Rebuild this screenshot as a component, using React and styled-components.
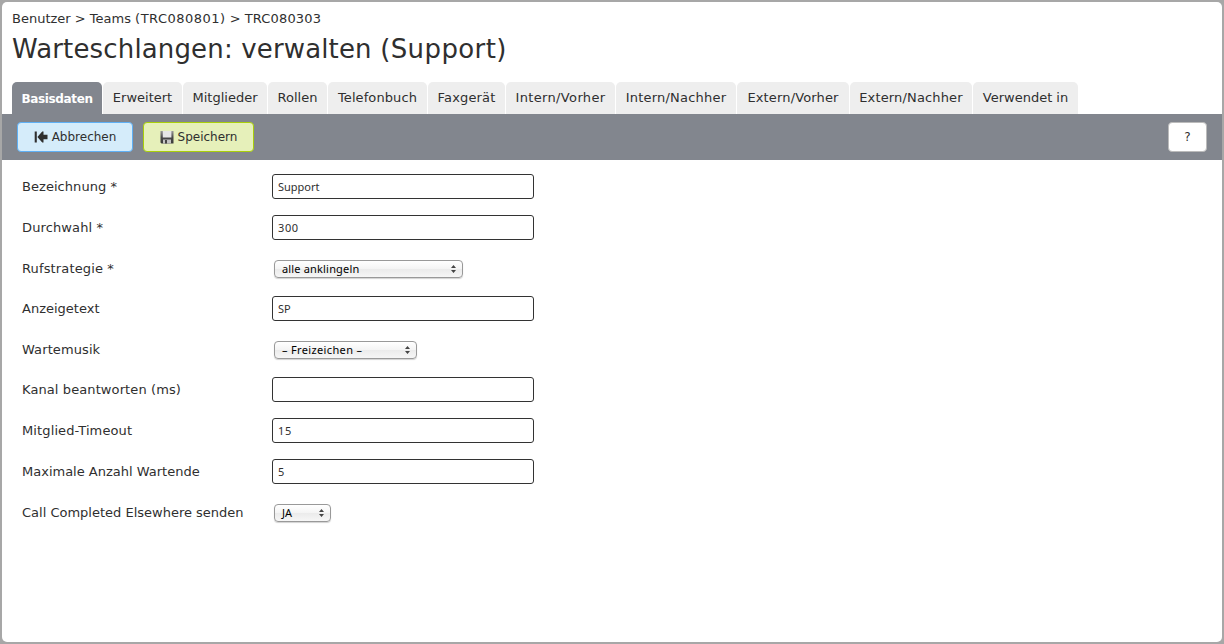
import React from "react";
import styled, { createGlobalStyle } from "styled-components";

const GlobalStyle = createGlobalStyle`
  * { box-sizing: border-box; }
  body {
    margin: 0;
    background: #a7a7a7;
    color: #2f2f2f;
    font-family: "DejaVu Sans", Verdana, sans-serif;
    font-size: 13px;
  }
  button, input { font-family: inherit; color: inherit; }
`;

const Window = styled.div`
  display: flex;
  flex-direction: column;
  height: 640px;
  margin: 2px;
  background: #fff;
  border-radius: 5px;
  overflow: hidden;
`;

const Header = styled.header`
  padding: 8px 10px 0;
  height: 80px;
  white-space: nowrap;
`;

const Text = styled.span`
  letter-spacing: ${(p) => p.$ls || 0}px;
`;

const Breadcrumb = styled.nav`
  height: 17px;
  line-height: 17px;
`;

const Title = styled.h1`
  margin: 5px 0 0;
  font-size: 26px;
  line-height: 34px;
  font-weight: 400;
`;

const Tabs = styled.nav`
  display: flex;
  gap: 1px;
  height: 32px;
  padding-left: 10px;
`;

const Tab = styled.a`
  display: flex;
  justify-content: center;
  width: ${(p) => p.$w}px;
  padding-top: ${(p) => (p.$active ? 1 : 0)}px;
  line-height: 32px;
  border-radius: 5px 5px 0 0;
  white-space: nowrap;
  color: ${(p) => (p.$active ? "#fff" : "#2f2f2f")};
  background: ${(p) => (p.$active ? "#82868e" : "#eee")};
  font-weight: ${(p) => (p.$active ? 700 : 400)};
  font-size: ${(p) => (p.$active ? 12 : 13)}px;
`;

const Toolbar = styled.div`
  display: flex;
  align-items: center;
  gap: 10px;
  height: 46px;
  padding: 0 15px;
  background: #82868e;
`;

const tones = {
  blue: ["#d5ecfa", "#5fb0f5"],
  green: ["#e6f0ba", "#a9cf0a"],
  white: ["#fff", "#bbb"],
};

const Button = styled.button`
  display: flex;
  align-items: center;
  justify-content: center;
  gap: 4px;
  width: ${(p) => p.$w}px;
  height: 30px;
  padding: 0 0 1px;
  margin-left: ${(p) => (p.$end ? "auto" : 0)};
  font-size: 12px;
  background: ${(p) => tones[p.$tone][0]};
  border: 1px solid ${(p) => tones[p.$tone][1]};
  border-radius: 4px;
  white-space: nowrap;
  svg { display: block; flex: none; }
`;

const Form = styled.form`
  padding: 6px 20px 0;
`;

const Row = styled.div`
  display: grid;
  grid-template-columns: 250px auto;
  align-items: center;
  justify-content: start;
  height: ${(p) => (p.$select ? 40 : 41)}px;
`;

const Label = styled.label`
  line-height: 17px;
  white-space: nowrap;
  padding-top: ${(p) => (p.$select ? 1 : 0)}px;
`;

const Input = styled.input`
  width: 262px;
  height: 25px;
  padding: 0 5px 1px;
  border: 1px solid #333;
  border-radius: 3px;
  background: #fff;
  font-family: "Noto Sans", "Open Sans", sans-serif;
  font-size: 11px;
  letter-spacing: ${(p) => p.$ls || 0}px;
`;

const Select = styled.div`
  display: flex;
  align-items: center;
  justify-content: space-between;
  width: ${(p) => p.$w}px;
  height: 18px;
  margin: 2px 0 0 2px;
  padding: 0 6px 0 7px;
  border: 1px solid #999;
  border-radius: 4px;
  background: linear-gradient(#fff, #f4f4f4 49%, #ebebeb 51%, #f6f6f6);
  box-shadow: 0 1px 1px rgba(0, 0, 0, 0.18);
  color: #000;
  font-family: "Noto Sans", "Open Sans", sans-serif;
  font-size: 11px;
  line-height: 16px;
  white-space: nowrap;
`;

const BackIcon = () => (
  <svg width="14" height="12" viewBox="0 0 14 12" fill="#2f2f2f">
    <path d="M.7 .5h2.1v11H.7zM3.4 6l4.8-5.4h1.3v3.2h4v4.4h-4v3.2H8.2z" />
  </svg>
);

const DiskIcon = () => (
  <svg width="14" height="14" viewBox="0 0 14 14">
    <defs>
      <linearGradient id="disk" x1="0" y1="0" x2="0" y2="1">
        <stop offset="0" stopColor="#999" />
        <stop offset=".5" stopColor="#4a4a4a" />
        <stop offset="1" stopColor="#3a3a3a" />
      </linearGradient>
    </defs>
    <path d="M.5 1h13v12.5H1.5l-1-1z" fill="url(#disk)" />
    <path d="M2.8 1h8.6v6.5H2.8z" fill="#e6e6e6" />
    <path d="M3 9.5h8v4H3z" fill="#c4c4c4" />
    <path d="M5 10h2v3.5H5z" fill="#444" />
  </svg>
);

const Arrows = () => (
  <svg width="5" height="8" viewBox="0 0 5 8" fill="#444">
    <path d="M2.5 0L5 3H0zM2.5 8L0 5h5z" />
  </svg>
);

const tabs = [
  ["Basisdaten", 90, -0.35],
  ["Erweitert", 79, 0],
  ["Mitglieder", 84, 0],
  ["Rollen", 59, 0],
  ["Telefonbuch", 99, 0.1],
  ["Faxgerät", 77, 0.15],
  ["Intern/Vorher", 109, 0.35],
  ["Intern/Nachher", 120, 0.2],
  ["Extern/Vorher", 112, 0.15],
  ["Extern/Nachher", 122, 0.15],
  ["Verwendet in", 105, 0],
];

const fields = [
  { label: "Bezeichnung *", ls: 0.05, value: "Support" },
  { label: "Durchwahl *", ls: 0.12, value: "300", vls: 0.6 },
  { label: "Rufstrategie *", ls: 0.14, value: "alle anklingeln", vls: 0.17, select: 189 },
  { label: "Anzeigetext", value: "SP" },
  { label: "Wartemusik", ls: 0.1, value: "– Freizeichen –", vls: 0.35, select: 143 },
  { label: "Kanal beantworten (ms)", ls: 0.1, value: "" },
  { label: "Mitglied-Timeout", ls: 0.12, value: "15", vls: 0.6 },
  { label: "Maximale Anzahl Wartende", value: "5" },
  { label: "Call Completed Elsewhere senden", value: "JA", select: 57 },
];

export default function App() {
  return (
    <>
      <GlobalStyle />
      <Window>
        <Header>
          <Breadcrumb>
            Benutzer &gt; Teams <Text $ls={0.48}>(TRC080801)</Text> &gt;{" "}
            <Text $ls={0.15}>TRC080303</Text>
          </Breadcrumb>
          <Title>
            <Text $ls={0.15}>Warteschlangen: verwalten </Text>
            <Text $ls={0.4}>(Support)</Text>
          </Title>
        </Header>
        <Tabs>
          {tabs.map(([name, w, ls], i) => (
            <Tab key={name} $w={w} $active={i === 0}>
              <Text $ls={ls}>{name}</Text>
            </Tab>
          ))}
        </Tabs>
        <Toolbar>
          <Button $tone="blue" $w={116}>
            <BackIcon />
            <Text>Abbrechen</Text>
          </Button>
          <Button $tone="green" $w={111}>
            <DiskIcon />
            <Text>Speichern</Text>
          </Button>
          <Button $tone="white" $w={39} $end>?</Button>
        </Toolbar>
        <Form>
          {fields.map((f) => (
            <Row key={f.label} $select={f.select}>
              <Label $select={f.select}>
                <Text $ls={f.ls}>{f.label}</Text>
              </Label>
              {f.select ? (
                <Select $w={f.select}>
                  <Text $ls={f.vls}>{f.value}</Text>
                  <Arrows />
                </Select>
              ) : (
                <Input defaultValue={f.value} $ls={f.vls} />
              )}
            </Row>
          ))}
        </Form>
      </Window>
    </>
  );
}
